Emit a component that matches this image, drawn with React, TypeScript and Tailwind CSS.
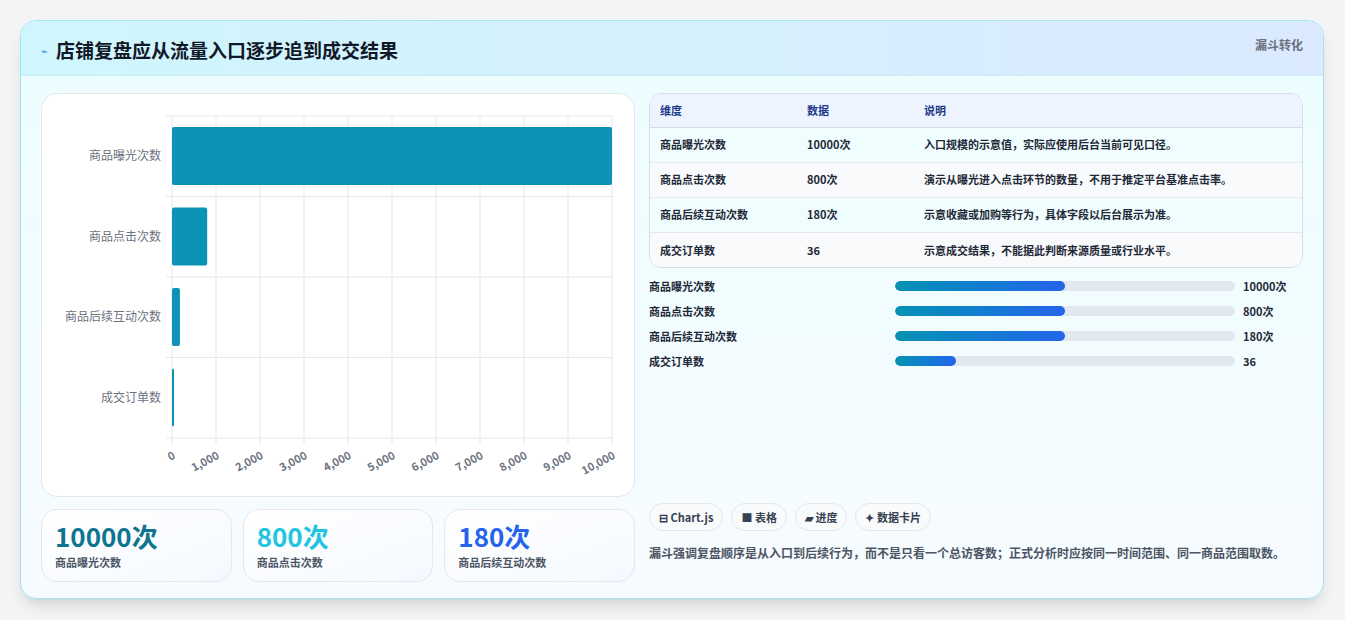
import React from 'react';

const rows = [
  { name: '商品曝光次数', v: 10000, unit: '10000次', desc: '入口规模的示意值，实际应使用后台当前可见口径。', pct: 50 },
  { name: '商品点击次数', v: 800, unit: '800次', desc: '演示从曝光进入点击环节的数量，不用于推定平台基准点击率。', pct: 50 },
  { name: '商品后续互动次数', v: 180, unit: '180次', desc: '示意收藏或加购等行为，具体字段以后台展示为准。', pct: 50 },
  { name: '成交订单数', v: 36, unit: '36', desc: '示意成交结果，不能据此判断来源质量或行业水平。', pct: 18 },
];

const font = { fontFamily: '"Noto Sans CJK SC", "Noto Sans", sans-serif' };

function Chart() {
  const x0 = 130, w = 440, y0 = 22, h = 322;
  const rowH = h / 4;
  return (
    <svg width="594" height="403" className="block">
      {Array.from({ length: 11 }).map((_, i) => (
        <line key={i} x1={x0 + i * 44} x2={x0 + i * 44} y1={y0} y2={y0 + h + 6} stroke="#e5e7eb" />
      ))}
      {Array.from({ length: 5 }).map((_, i) => (
        <line key={i} x1={x0 - 6} x2={x0 + w} y1={y0 + i * rowH} y2={y0 + i * rowH} stroke="#e5e7eb" />
      ))}
      {rows.map((r, i) => (
        <g key={i}>
          <rect x={x0} y={y0 + i * rowH + 11} width={Math.max(2, (r.v / 10000) * w)} height={58} rx={2} fill="#0a93b4" />
          <text x={x0 - 11} y={y0 + i * rowH + rowH / 2 + 4} textAnchor="end" fontSize="12" fill="#6b7280" style={font}>{r.name}</text>
        </g>
      ))}
      {Array.from({ length: 11 }).map((_, i) => (
        <text key={i} x={x0 + i * 44 + 4} y={y0 + h + 20} textAnchor="end" fontSize="11" fontWeight="bold" fill="#6b7280"
          transform={`rotate(-28 ${x0 + i * 44 + 4} ${y0 + h + 20})`} style={font}>
          {(i * 1000).toLocaleString('en-US')}
        </text>
      ))}
    </svg>
  );
}

export default function App() {
  return (
    <div className="w-[1345px] h-[620px] bg-[#f3f4f6] pt-5 pl-5" style={font}>
      <div className="w-[1304px] h-[579px] rounded-2xl border border-[#a5e4f0] bg-gradient-to-b from-[#ecfeff] to-[#f7fbff] overflow-hidden shadow-lg">
        <div className="h-[55px] flex items-start justify-between px-5 bg-gradient-to-r from-[#cff6fd] to-[#dbeafe] border-b border-[#c9eef6]">
          <div className="flex items-center gap-2 mt-[15px]">
            <span className="text-[11px] text-[#3b82f6]">⌁</span>
            <h1 className="text-[19px] font-bold text-[#111827]">店铺复盘应从流量入口逐步追到成交结果</h1>
          </div>
          <span className="text-xs font-bold text-[#6b7280] mt-4">漏斗转化</span>
        </div>
        <div className="flex gap-[14px] px-5 pt-[17px]">
          <div className="w-[594px] flex flex-col gap-3">
            <div className="h-[404px] rounded-2xl border border-[#e5e7eb] bg-white">
              <Chart />
            </div>
            <div className="grid grid-cols-3 gap-[11px]">
              {[['10000次', 'text-[#0e7490]', '商品曝光次数'], ['800次', 'text-[#22c5e0]', '商品点击次数'], ['180次', 'text-[#2563eb]', '商品后续互动次数']].map(([v, c, l]) => (
                <div key={l} className="h-[73px] rounded-2xl border border-[#e5e7eb] bg-gradient-to-br from-white to-[#f5f9ff] px-[13px] pt-2">
                  <div className={`text-[26px] font-bold leading-9 ${c}`}>{v}</div>
                  <div className="text-[11px] font-bold text-[#4b5563]">{l}</div>
                </div>
              ))}
            </div>
          </div>
          <div className="flex-1 flex flex-col">
            <div className="rounded-xl border border-[#d7dee8] overflow-hidden bg-white">
              <table className="w-full text-[11px] font-bold text-[#1f2937]">
                <thead>
                  <tr className="bg-[#eef4ff] text-[#1e3a8a] h-[33px] border-b border-[#d7dee8]">
                    <th className="text-left pl-[10px] w-[157px]">维度</th>
                    <th className="text-left w-[117px]">数据</th>
                    <th className="text-left">说明</th>
                  </tr>
                </thead>
                <tbody>
                  {rows.map((r, i) => (
                    <tr key={i} className={`h-[35px] border-b border-[#e5e7eb] last:border-0 ${i % 2 ? 'bg-[#f8fafc]' : 'bg-[#f0fdff]'}`}>
                      <td className="pl-[10px]">{r.name}</td>
                      <td>{r.unit}</td>
                      <td>{r.desc}</td>
                    </tr>
                  ))}
                </tbody>
              </table>
            </div>
            <div className="flex flex-col gap-[13px] mt-3">
              {rows.map((r, i) => (
                <div key={i} className="flex items-center h-3 text-[11px] font-bold text-[#1f2937]">
                  <div className="w-[246px]">{r.name}</div>
                  <div className="w-[340px] h-[10px] rounded-full bg-[#e2e8f0] overflow-hidden">
                    <div className="h-full rounded-full bg-gradient-to-r from-[#0891b2] to-[#2563eb]" style={{ width: `${r.pct}%` }} />
                  </div>
                  <div className="ml-2">{r.unit}</div>
                </div>
              ))}
            </div>
            <div className="flex gap-2 mt-[136px]">
              {['⊟ Chart.js', '■ 表格', '▰ 进度', '✦ 数据卡片'].map(t => (
                <span key={t} className="h-7 px-[9px] rounded-full border border-[#e5e7eb] bg-[#f9fafb] text-[11px] font-bold text-[#374151] flex items-center">{t}</span>
              ))}
            </div>
            <p className="mt-3 text-[12px] font-bold leading-5 text-[#4b5563]">漏斗强调复盘顺序是从入口到后续行为，而不是只看一个总访客数；正式分析时应按同一时间范围、同一商品范围取数。</p>
          </div>
        </div>
      </div>
    </div>
  );
}
